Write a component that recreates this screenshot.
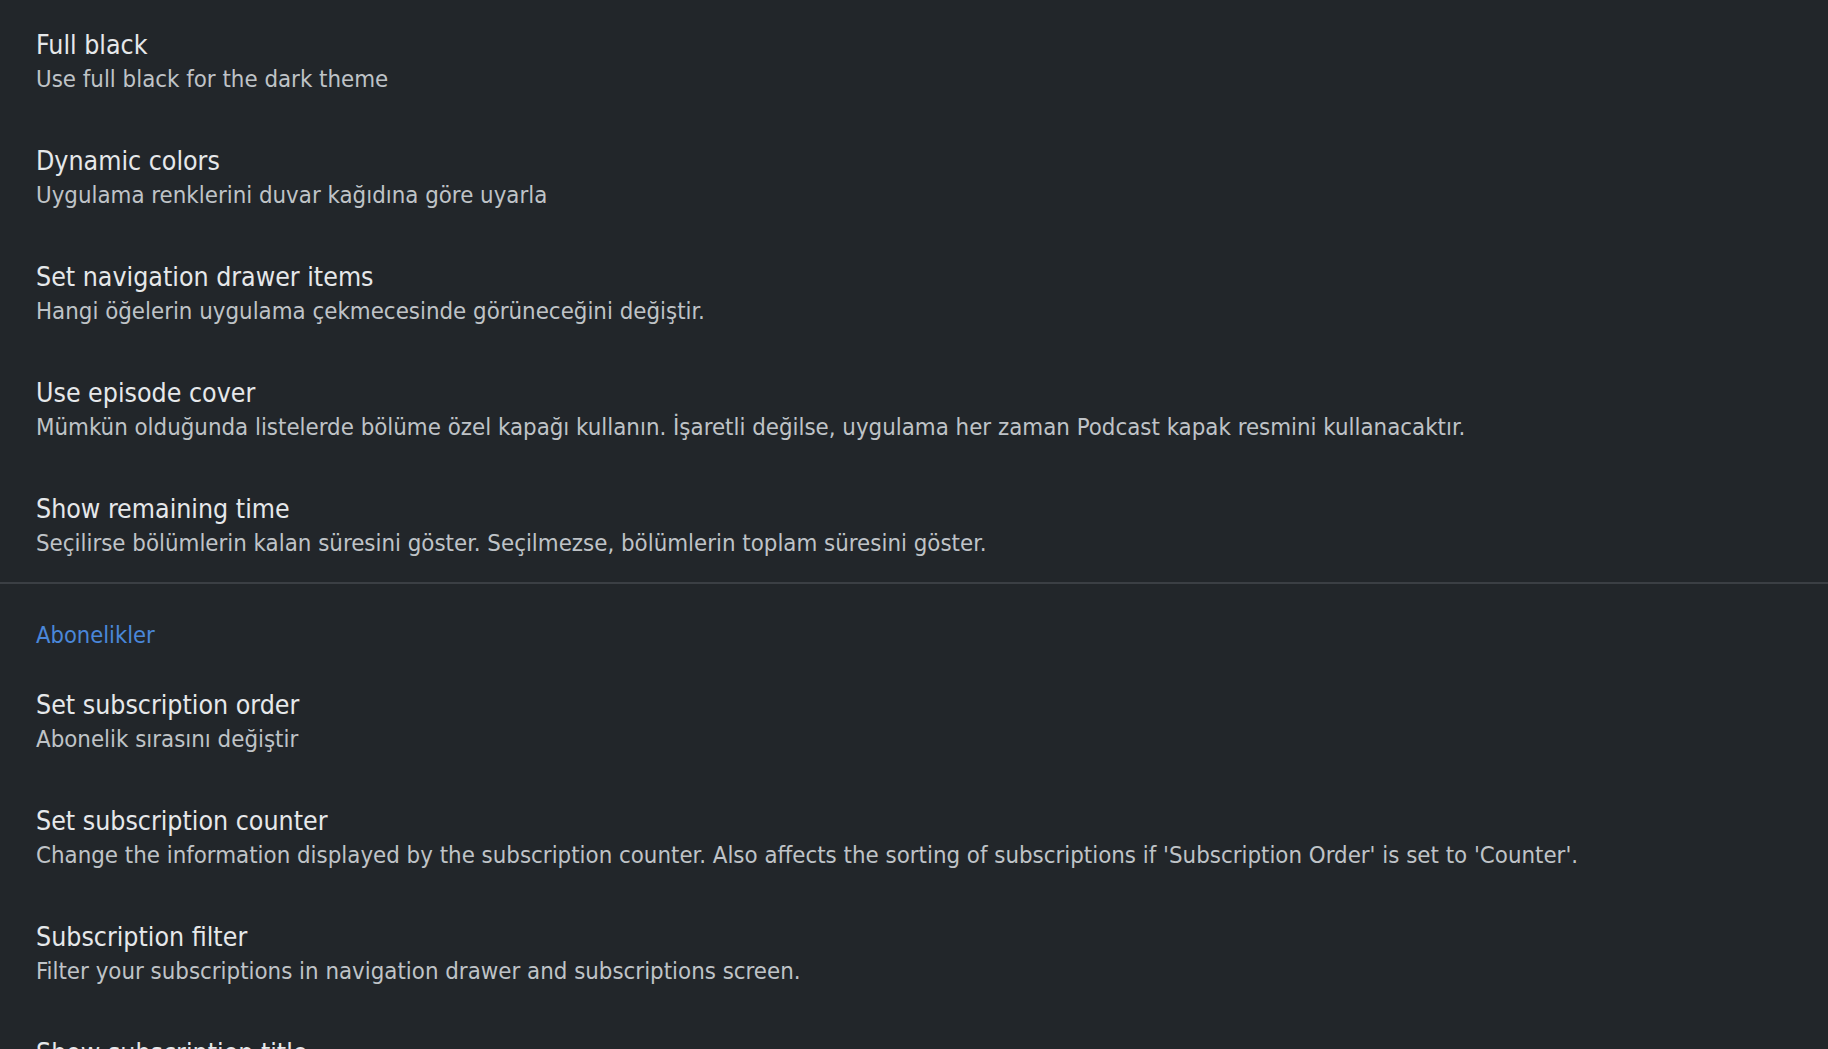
import React from 'react'

interface Pref {
  title: string
  summary?: string
}

const appearance: Pref[] = [
  { title: 'Full black', summary: 'Use full black for the dark theme' },
  { title: 'Dynamic colors', summary: 'Uygulama renklerini duvar kağıdına göre uyarla' },
  { title: 'Set navigation drawer items', summary: 'Hangi öğelerin uygulama çekmecesinde görüneceğini değiştir.' },
  {
    title: 'Use episode cover',
    summary:
      'Mümkün olduğunda listelerde bölüme özel kapağı kullanın. İşaretli değilse, uygulama her zaman Podcast kapak resmini kullanacaktır.',
  },
  {
    title: 'Show remaining time',
    summary: 'Seçilirse bölümlerin kalan süresini göster. Seçilmezse, bölümlerin toplam süresini göster.',
  },
]

const subscriptions: Pref[] = [
  { title: 'Set subscription order', summary: 'Abonelik sırasını değiştir' },
  {
    title: 'Set subscription counter',
    summary:
      "Change the information displayed by the subscription counter. Also affects the sorting of subscriptions if 'Subscription Order' is set to 'Counter'.",
  },
  { title: 'Subscription filter', summary: 'Filter your subscriptions in navigation drawer and subscriptions screen.' },
  { title: 'Show subscription title', summary: 'Display the subscription title below the cover image.' },
]

function PrefRow({ pref }: { pref: Pref }) {
  return (
    <div className="pt-[28px] pb-[19px] px-[36px]">
      <div className="text-[26.5px] leading-[34px] text-[#e6e8ea] whitespace-nowrap">{pref.title}</div>
      {pref.summary && (
        <div className="text-[23.8px] leading-[35px] text-[#bfc3c7] whitespace-nowrap">{pref.summary}</div>
      )}
    </div>
  )
}

export default function App() {
  return (
    <div className="w-[1828px] h-[1049px] overflow-hidden bg-[#22262a] font-['DejaVu_Sans_Condensed','DejaVu_Sans',sans-serif] font-stretch-condensed">
      {/* Appearance */}
      <div>
        {appearance.map((p) => (
          <PrefRow key={p.title} pref={p} />
        ))}
      </div>

      <div className="mt-[2px] h-[2px] bg-[#3b3f44]" />

      {/* Subscriptions */}
      <div className="pt-[34px] pb-[8px] px-[36px] text-[23.5px] leading-[34px] text-[#4a87d9]">Abonelikler</div>
      <div>
        {subscriptions.map((p) => (
          <PrefRow key={p.title} pref={p} />
        ))}
      </div>
    </div>
  )
}
